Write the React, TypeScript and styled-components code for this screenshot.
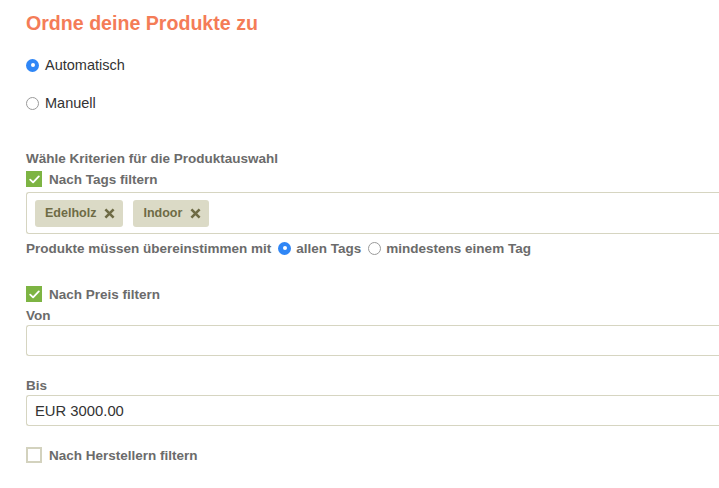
import React from "react";
import styled, { createGlobalStyle } from "styled-components";

const Global = createGlobalStyle`
  html, body { margin: 0; padding: 0; background: #fff; overflow: hidden; }
  body { font-family: "Liberation Sans", Arial, Helvetica, sans-serif; }
  * { box-sizing: border-box; }
`;

const Page = styled.div`
  width: 760px;
  padding: 11px 0 0 26px;
  display: flex;
  flex-direction: column;
`;

const Title = styled.h1`
  margin: 0;
  font-size: 19.6px;
  line-height: 24px;
  font-weight: 700;
  color: #f47c57;
`;

const RadioRow = styled.label<{ $mt: number }>`
  display: flex;
  align-items: center;
  gap: 6px;
  margin-top: ${(p) => p.$mt}px;
  height: 18px;
  font-size: 14.5px;
  color: #333;
`;

const Radio = styled.span<{ $on?: boolean }>`
  width: 13px;
  height: 13px;
  border-radius: 50%;
  flex: none;
  display: inline-flex;
  align-items: center;
  justify-content: center;
  background: ${(p) => (p.$on ? "#2f86f6" : "#fff")};
  border: ${(p) => (p.$on ? "none" : "1px solid #9a9a9a")};
  &::after {
    content: "";
    width: 4px;
    height: 4px;
    border-radius: 50%;
    background: #fff;
    display: ${(p) => (p.$on ? "block" : "none")};
  }
`;

const Label = styled.div<{ $mt: number }>`
  margin-top: ${(p) => p.$mt}px;
  font-size: 13.5px;
  line-height: 16px;
  font-weight: 700;
  color: #6b6b6b;
`;

const CheckRow = styled.label<{ $mt: number }>`
  display: flex;
  align-items: center;
  gap: 7px;
  margin-top: ${(p) => p.$mt}px;
  height: 16px;
  font-size: 13.5px;
  font-weight: 700;
  color: #6b6b6b;
`;

const Box = styled.span<{ $on?: boolean }>`
  width: 16px;
  height: 16px;
  flex: none;
  display: inline-flex;
  align-items: center;
  justify-content: center;
  background: ${(p) => (p.$on ? "#7db443" : "#fff")};
  border: ${(p) => (p.$on ? "none" : "2px solid #d3d2be")};
`;

const TagBox = styled.div`
  margin-top: 5px;
  height: 42px;
  border: 1px solid #d6d5c1;
  border-right: none;
  border-radius: 3px 0 0 3px;
  display: flex;
  align-items: center;
  gap: 10px;
  padding-left: 8px;
`;

const Tag = styled.span`
  height: 27px;
  display: inline-flex;
  align-items: center;
  gap: 8px;
  padding: 0 8px 0 10px;
  background: #dbdac6;
  border-radius: 3px;
  font-size: 12.5px;
  font-weight: 700;
  color: #6e6b45;
`;

const MatchRow = styled.div`
  margin-top: 6px;
  display: flex;
  align-items: center;
  gap: 7px;
  height: 16px;
  font-size: 13.5px;
  font-weight: 700;
  color: #6b6b6b;
`;

const MatchOpt = styled.span`
  display: inline-flex;
  align-items: center;
  gap: 5px;
`;

const Input = styled.div<{ $mt: number }>`
  margin-top: ${(p) => p.$mt}px;
  height: 31px;
  border: 1px solid #d6d5c1;
  border-right: none;
  border-radius: 3px 0 0 3px;
  display: flex;
  align-items: center;
  padding-left: 8px;
  font-size: 14.8px;
  color: #333;
`;

const Check = () => (
  <svg width="11" height="9" viewBox="0 0 11 9">
    <path d="M1.2 4.6 L4.1 7.4 L9.8 1.4" fill="none" stroke="#fff" strokeWidth="1.8" strokeLinecap="round" strokeLinejoin="round" />
  </svg>
);

const X = () => (
  <svg width="11" height="11" viewBox="0 0 11 11">
    <path d="M1.4 1.4 L9.6 9.6 M9.6 1.4 L1.4 9.6" stroke="#6e6b45" strokeWidth="2.6" strokeLinecap="butt" />
  </svg>
);

export default function App() {
  return (
    <>
      <Global />
      <Page>
        <Title>Ordne deine Produkte zu</Title>
        <RadioRow $mt={21}>
          <Radio $on />
          Automatisch
        </RadioRow>
        <RadioRow $mt={20}>
          <Radio />
          Manuell
        </RadioRow>
        <Label $mt={39}>Wähle Kriterien für die Produktauswahl</Label>
        <CheckRow $mt={4}>
          <Box $on>
            <Check />
          </Box>
          Nach Tags filtern
        </CheckRow>
        <TagBox>
          <Tag>
            <span>Edelholz</span>
            <X />
          </Tag>
          <Tag>
            <span>Indoor</span>
            <X />
          </Tag>
        </TagBox>
        <MatchRow>
          Produkte müssen übereinstimmen mit
          <MatchOpt>
            <Radio $on />
            allen Tags
          </MatchOpt>
          <MatchOpt>
            <Radio />
            mindestens einem Tag
          </MatchOpt>
        </MatchRow>
        <CheckRow $mt={30}>
          <Box $on>
            <Check />
          </Box>
          Nach Preis filtern
        </CheckRow>
        <Label $mt={6}>Von</Label>
        <Input $mt={1} />
        <Label $mt={22}>Bis</Label>
        <Input $mt={1}>EUR 3000.00</Input>
        <CheckRow $mt={21}>
          <Box />
          Nach Herstellern filtern
        </CheckRow>
      </Page>
    </>
  );
}
